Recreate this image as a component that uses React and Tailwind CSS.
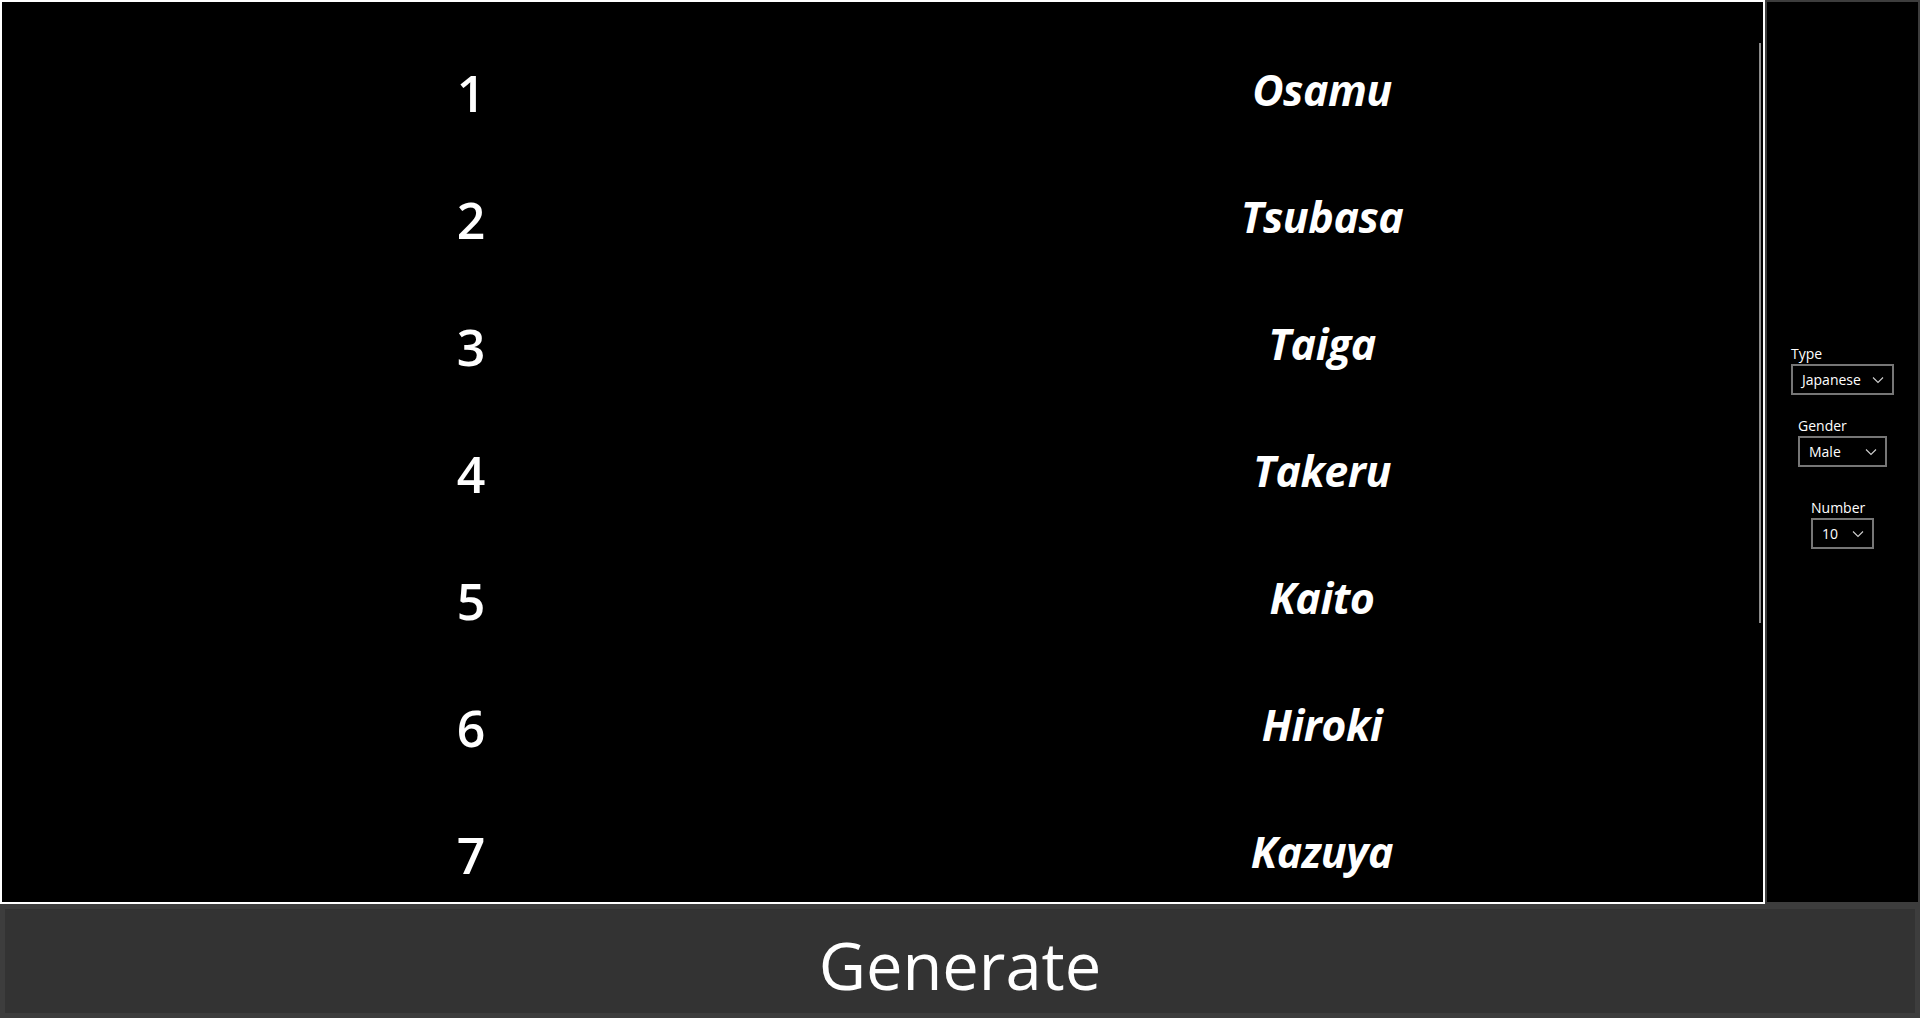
import React, { useState } from "react";

// names currently shown in the list
const NAMES = ["Osamu", "Tsubasa", "Taiga", "Takeru", "Kaito", "Hiroki", "Kazuya"];

const Chevron = () => (
  <svg width="12" height="8" viewBox="0 0 12 8" className="shrink-0">
    <polyline points="1,1.5 6,6.5 11,1.5" fill="none" stroke="#d0d0d0" strokeWidth="1.1" />
  </svg>
);

const Combo = ({ label, value, width, className = "" }) => (
  <div className={`flex flex-col ${className}`} style={{ width }}>
    <span className="text-[14px] leading-[20px] text-white">{label}</span>
    <div className="h-[31px] border-2 border-[#767676] flex items-center justify-between pl-[9px] pr-[8px]">
      <span className="text-[14px] leading-none text-white">{value}</span>
      <Chevron />
    </div>
  </div>
);

const App = () => {
  const [names] = useState(NAMES);

  return (
    <div className="w-[1920px] h-[1018px] bg-[#3d3d3d] flex flex-col overflow-hidden font-['Open_Sans','Noto_Sans',sans-serif]">
      <div className="flex h-[904px]">
        {/* Result list */}
        <div className="relative w-[1765px] h-full border-2 border-white bg-black overflow-hidden">
          <div className="grid grid-cols-[938px_764px] pt-[27px]">
            {names.map((name, i) => (
              <React.Fragment key={name}>
                <div className="h-[127px] flex items-center justify-center text-[50px] font-semibold text-white leading-none">
                  {i + 1}
                </div>
                <div className="h-[127px] flex items-center justify-center pb-[6px] text-[43px] font-bold italic text-white leading-none tracking-[-0.5px]">
                  {name}
                </div>
              </React.Fragment>
            ))}
          </div>
          <div className="absolute top-[41px] right-[2px] w-[2px] h-[580px] bg-[#8a8a8a]" />
        </div>

        {/* Options */}
        <div className="w-[155px] h-full p-[2px]">
          <div className="h-full bg-black flex flex-col items-center pt-[342px]">
            <Combo label="Type" value="Japanese" width={103} />
            <Combo label="Gender" value="Male" width={89} className="mt-[21px]" />
            <Combo label="Number" value="10" width={63} className="mt-[31px]" />
          </div>
        </div>
      </div>

      <div className="flex-1 p-[5px]">
        <button className="w-full h-full bg-[#333333] text-white text-[65px] leading-none flex items-center justify-center pt-[8px]">
          Generate
        </button>
      </div>
    </div>
  );
};

export default App;
